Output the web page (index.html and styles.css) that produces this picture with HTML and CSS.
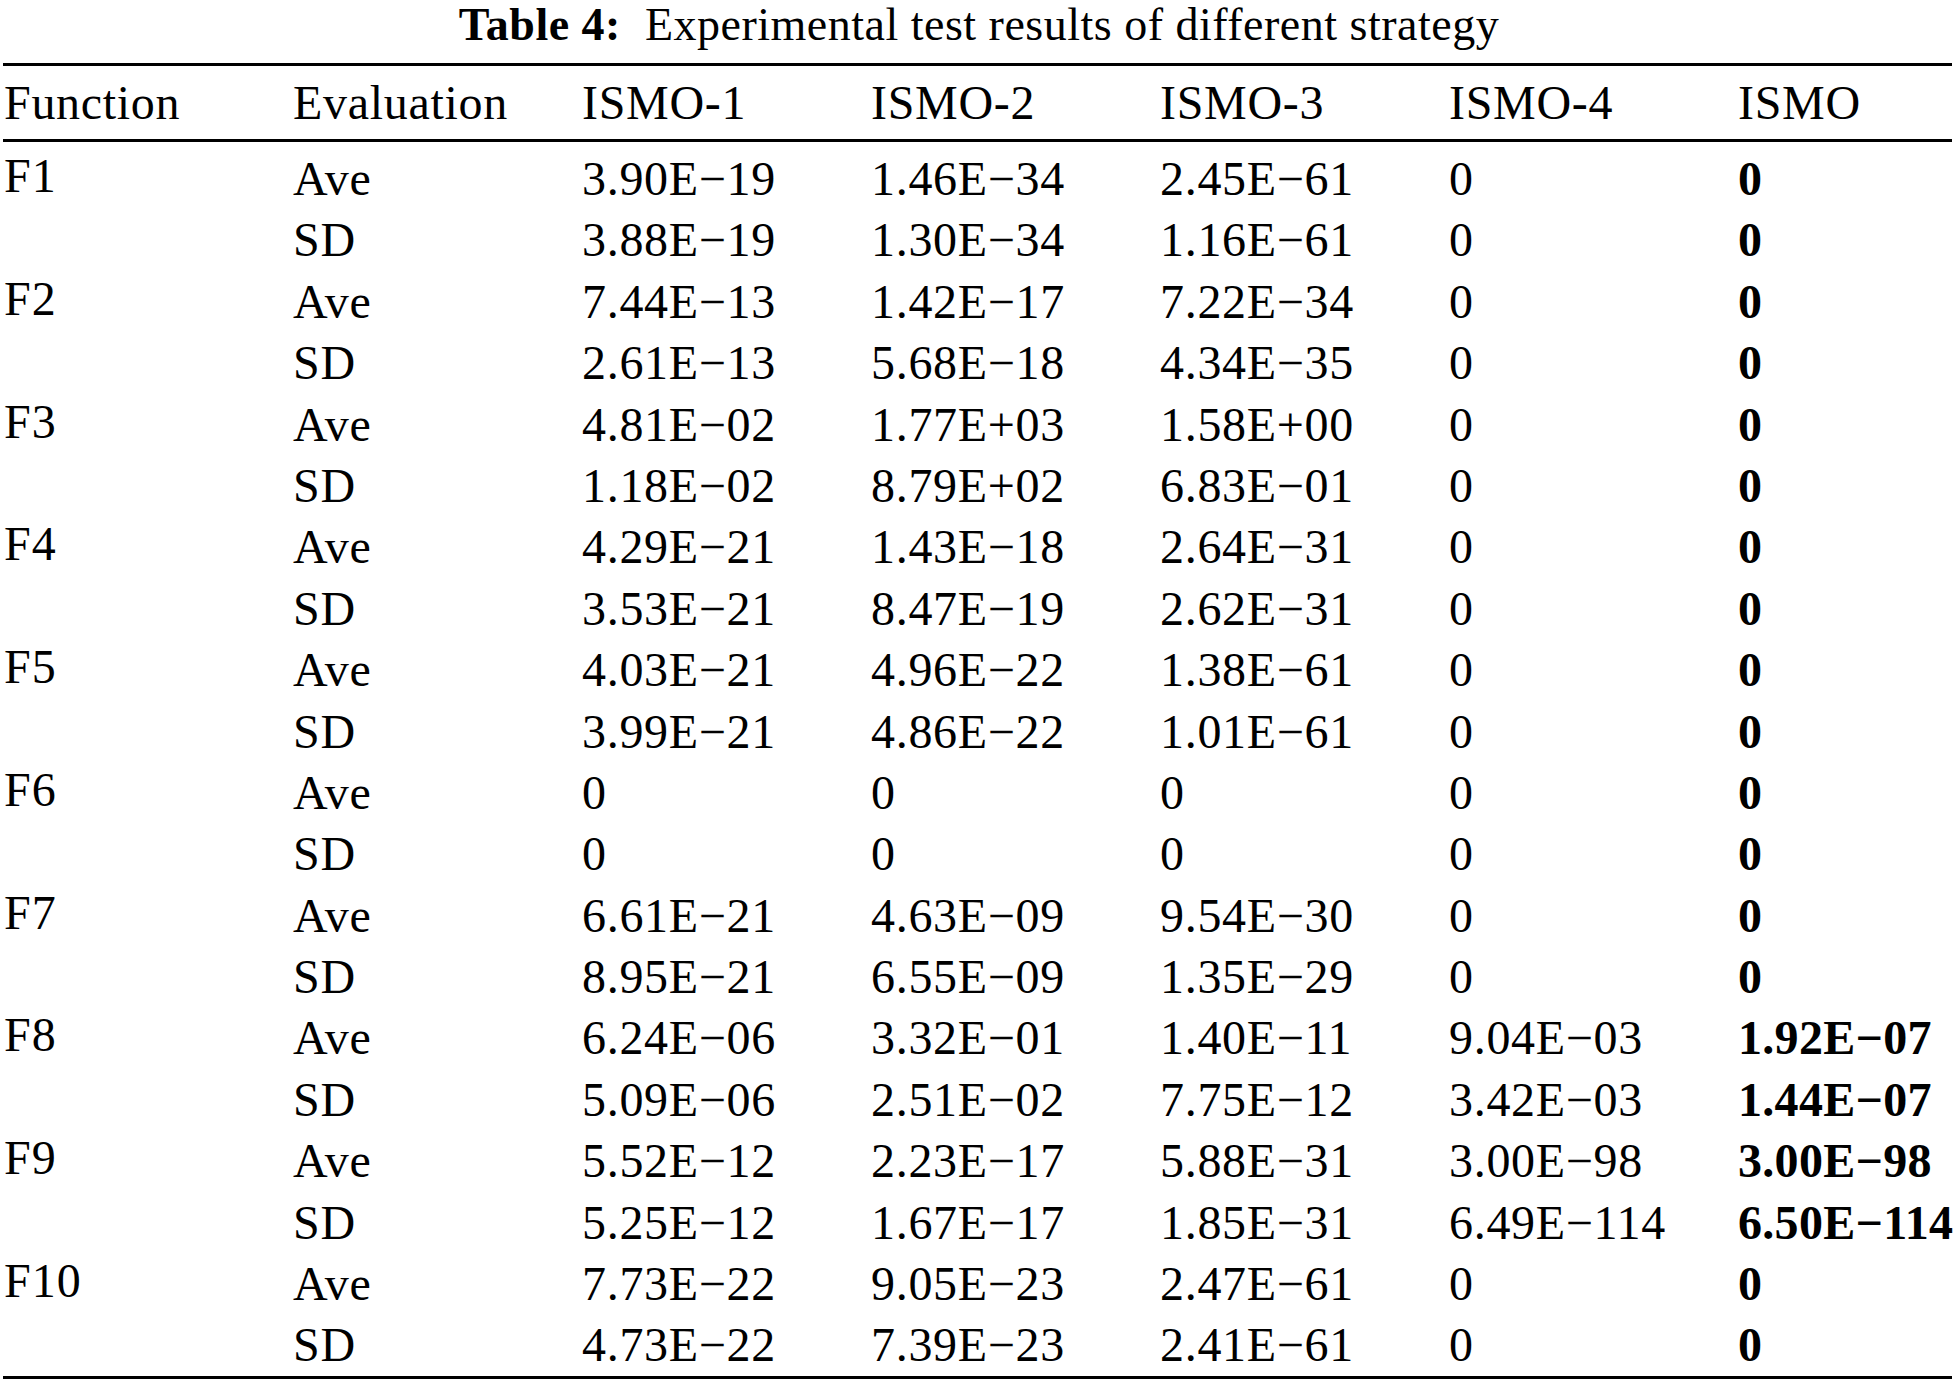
FILE: index.html
```html
<!DOCTYPE html>
<html lang="en">
<head>
<meta charset="utf-8">
<title>Table 4: Experimental test results of different strategy</title>
<link rel="stylesheet" href="styles.css">
</head>
<body>
<div class="page">
  <div class="caption"><b>Table 4:</b>&nbsp; Experimental test results of different strategy</div>
  <div class="table">
    <div class="head">
      <div class="c">Function</div>
      <div class="c">Evaluation</div>
      <div class="c">ISMO-1</div>
      <div class="c">ISMO-2</div>
      <div class="c">ISMO-3</div>
      <div class="c">ISMO-4</div>
      <div class="c">ISMO</div>
    </div>
    <div class="body">
      <div class="fn">F1</div>
      <div class="c">Ave</div><div class="c">3.90E−19</div><div class="c">1.46E−34</div><div class="c">2.45E−61</div><div class="c">0</div><div class="c b">0</div>
      <div class="c">SD</div><div class="c">3.88E−19</div><div class="c">1.30E−34</div><div class="c">1.16E−61</div><div class="c">0</div><div class="c b">0</div>

      <div class="fn">F2</div>
      <div class="c">Ave</div><div class="c">7.44E−13</div><div class="c">1.42E−17</div><div class="c">7.22E−34</div><div class="c">0</div><div class="c b">0</div>
      <div class="c">SD</div><div class="c">2.61E−13</div><div class="c">5.68E−18</div><div class="c">4.34E−35</div><div class="c">0</div><div class="c b">0</div>

      <div class="fn">F3</div>
      <div class="c">Ave</div><div class="c">4.81E−02</div><div class="c">1.77E+03</div><div class="c">1.58E+00</div><div class="c">0</div><div class="c b">0</div>
      <div class="c">SD</div><div class="c">1.18E−02</div><div class="c">8.79E+02</div><div class="c">6.83E−01</div><div class="c">0</div><div class="c b">0</div>

      <div class="fn">F4</div>
      <div class="c">Ave</div><div class="c">4.29E−21</div><div class="c">1.43E−18</div><div class="c">2.64E−31</div><div class="c">0</div><div class="c b">0</div>
      <div class="c">SD</div><div class="c">3.53E−21</div><div class="c">8.47E−19</div><div class="c">2.62E−31</div><div class="c">0</div><div class="c b">0</div>

      <div class="fn">F5</div>
      <div class="c">Ave</div><div class="c">4.03E−21</div><div class="c">4.96E−22</div><div class="c">1.38E−61</div><div class="c">0</div><div class="c b">0</div>
      <div class="c">SD</div><div class="c">3.99E−21</div><div class="c">4.86E−22</div><div class="c">1.01E−61</div><div class="c">0</div><div class="c b">0</div>

      <div class="fn">F6</div>
      <div class="c">Ave</div><div class="c">0</div><div class="c">0</div><div class="c">0</div><div class="c">0</div><div class="c b">0</div>
      <div class="c">SD</div><div class="c">0</div><div class="c">0</div><div class="c">0</div><div class="c">0</div><div class="c b">0</div>

      <div class="fn">F7</div>
      <div class="c">Ave</div><div class="c">6.61E−21</div><div class="c">4.63E−09</div><div class="c">9.54E−30</div><div class="c">0</div><div class="c b">0</div>
      <div class="c">SD</div><div class="c">8.95E−21</div><div class="c">6.55E−09</div><div class="c">1.35E−29</div><div class="c">0</div><div class="c b">0</div>

      <div class="fn">F8</div>
      <div class="c">Ave</div><div class="c">6.24E−06</div><div class="c">3.32E−01</div><div class="c">1.40E−11</div><div class="c">9.04E−03</div><div class="c b">1.92E−07</div>
      <div class="c">SD</div><div class="c">5.09E−06</div><div class="c">2.51E−02</div><div class="c">7.75E−12</div><div class="c">3.42E−03</div><div class="c b">1.44E−07</div>

      <div class="fn">F9</div>
      <div class="c">Ave</div><div class="c">5.52E−12</div><div class="c">2.23E−17</div><div class="c">5.88E−31</div><div class="c">3.00E−98</div><div class="c b">3.00E−98</div>
      <div class="c">SD</div><div class="c">5.25E−12</div><div class="c">1.67E−17</div><div class="c">1.85E−31</div><div class="c">6.49E−114</div><div class="c b">6.50E−114</div>

      <div class="fn">F10</div>
      <div class="c">Ave</div><div class="c">7.73E−22</div><div class="c">9.05E−23</div><div class="c">2.47E−61</div><div class="c">0</div><div class="c b">0</div>
      <div class="c">SD</div><div class="c">4.73E−22</div><div class="c">7.39E−23</div><div class="c">2.41E−61</div><div class="c">0</div><div class="c b">0</div>
    </div>
  </div>
</div>
</body>
</html>
```

FILE: styles.css
```css
html, body {
  margin: 0;
  padding: 0;
  background: #ffffff;
}

body {
  font-family: "Liberation Serif", "Times New Roman", serif;
  color: #000000;
}

.page {
  width: 1958px;
}

.caption {
  font-size: 46px;
  line-height: 50px;
  letter-spacing: 0.5px;
  text-align: center;
  margin-bottom: 13px;
  white-space: nowrap;
}

.caption b {
  font-weight: 700;
}

.table {
  margin-left: 3px;
  width: 1949px;
  font-size: 48px;
  letter-spacing: 0.7px;
  white-space: nowrap;
}

.head,
.body {
  display: grid;
  grid-template-columns: repeat(6, 289px) 1fr;
}

.head {
  border-top: 3px solid #000000;
  border-bottom: 3px solid #000000;
  grid-auto-rows: 73px;
  line-height: 73px;
}

.body {
  padding-top: 6px;
  border-bottom: 3px solid #000000;
  grid-auto-rows: 61.4px;
  line-height: 61.4px;
}

.c {
  padding-left: 1px;
}

.fn {
  grid-row: span 2;
  padding-left: 1px;
  line-height: 55px;
  align-self: start;
  letter-spacing: 1px;
}

.b {
  font-weight: 700;
  letter-spacing: 0.3px;
}
```
